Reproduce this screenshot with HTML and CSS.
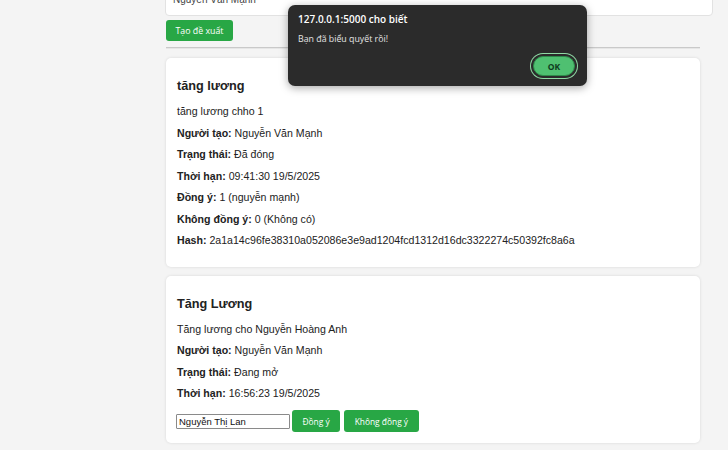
FILE: index.html
```html
<!DOCTYPE html>
<html lang="vi">
<head>
<meta charset="utf-8">
<title>Đề xuất</title>
<link rel="stylesheet" href="styles.css">
</head>
<body>
<div class="page">
  <div class="container">
    <div class="topbox"><span class="topval">Nguyễn Văn Mạnh</span></div>
    <button class="btn btn-create">Tạo đề xuất</button>
    <hr class="sep">

    <div class="card">
      <h3 class="title">tăng lương</h3>
      <p>tăng lương chho 1</p>
      <p><b>Người tạo:</b> Nguyễn Văn Mạnh</p>
      <p><b>Trạng thái:</b> Đã đóng</p>
      <p><b>Thời hạn:</b> 09:41:30 19/5/2025</p>
      <p><b>Đồng ý:</b> 1 (nguyễn mạnh)</p>
      <p><b>Không đồng ý:</b> 0 (Không có)</p>
      <p><b>Hash:</b> 2a1a14c96fe38310a052086e3e9ad1204fcd1312d16dc3322274c50392fc8a6a</p>
    </div>

    <div class="card">
      <h3 class="title">Tăng Lương</h3>
      <p>Tăng lương cho Nguyễn Hoàng Anh</p>
      <p><b>Người tạo:</b> Nguyễn Văn Mạnh</p>
      <p><b>Trạng thái:</b> Đang mở</p>
      <p><b>Thời hạn:</b> 16:56:23 19/5/2025</p>
      <div class="vote">
        <input class="name" type="text" value="Nguyễn Thị Lan">
        <button class="btn btn-vote">Đồng ý</button>
        <button class="btn btn-vote">Không đồng ý</button>
      </div>
    </div>
  </div>

  <div class="dialog">
    <div class="dlg-title">127.0.0.1:5000 cho biết</div>
    <div class="dlg-msg">Bạn đã biểu quyết rồi!</div>
    <div class="dlg-actions"><button class="dlg-ok">OK</button></div>
  </div>
</div>
</body>
</html>
```

FILE: styles.css
```css
html {
  background: #ffffff;
}
body {
  margin: 0;
  font-family: "Liberation Sans", Arial, sans-serif;
  color: #222;
}
.page {
  position: relative;
  background: #f4f4f4;
  height: 450px;
  overflow: hidden;
}
.container {
  width: 534px;
  margin-left: 166px;
}
.topbox {
  box-sizing: border-box;
  width: 548px;
  height: 32px;
  margin-top: -16px;
  margin-left: -1px;
  background: #fff;
  border: 1px solid #e2e2e2;
  border-radius: 4px;
  padding: 9px 7px 0;
  font-size: 10px;
  line-height: 12px;
  color: #444;
}
.btn {
  font-family: "Open Sans", "Noto Sans", sans-serif;
  background: #28a745;
  color: #fff;
  border: none;
  border-radius: 3px;
  font-size: 8.8px;
  cursor: pointer;
}
.btn-create {
  display: block;
  margin-top: 4px;
  width: 67px;
  height: 21px;
  padding: 0;
}
.sep {
  margin: 6px 0 9px;
  border: none;
  border-top: 1px solid #c9c9c9;
  border-bottom: 1px solid #e6e6e6;
}
.card {
  background: #fff;
  border-radius: 5px;
  box-shadow: 0 0 3px rgba(0, 0, 0, 0.12);
  padding: 11px 11px;
  margin-bottom: 9px;
}
.title {
  font-size: 12.7px;
  line-height: 15px;
  margin: 10px 0 11px;
  font-weight: bold;
}
.card p {
  font-size: 10.6px;
  line-height: 13px;
  margin: 8.5px 0;
}
.vote {
  display: flex;
  align-items: center;
  margin-top: 10px;
}
.name {
  box-sizing: border-box;
  width: 114px;
  height: 15px;
  padding: 0 2px;
  border: 1px solid #8a8a8a;
  border-radius: 1px;
  font-family: "Liberation Sans", Arial, sans-serif;
  font-size: 9.5px;
  color: #111;
  margin: 0 2px 0 -1px;
}
.btn-vote {
  height: 22px;
  padding: 0 10.5px;
  margin-right: 4px;
  font-size: 8.4px;
}
.dialog {
  position: absolute;
  left: 288px;
  top: 5px;
  width: 299px;
  height: 81px;
  box-sizing: border-box;
  background: #2b2b2b;
  border-radius: 7px;
  box-shadow: 0 2px 8px rgba(0, 0, 0, 0.35);
  padding: 8px 9px 0 10px;
  font-family: "Open Sans", "Noto Sans", sans-serif;
  color: #fff;
}
.dlg-title {
  font-size: 10px;
  font-weight: 600;
  line-height: 13px;
}
.dlg-msg {
  margin-top: 7px;
  font-size: 8.8px;
  line-height: 12px;
  color: #e4e4e4;
}
.dlg-actions {
  display: flex;
  justify-content: flex-end;
  margin-top: 11px;
}
.dlg-ok {
  width: 42px;
  height: 20px;
  margin-right: 3px;
  padding: 0;
  border: 1px solid #2f8a4b;
  border-radius: 10px;
  background: #4fc071;
  color: #0e3b1d;
  font-family: "Open Sans", "Noto Sans", sans-serif;
  font-size: 8.5px;
  font-weight: 700;
  box-shadow: 0 0 0 2px #2b2b2b, 0 0 0 3px #8fd9a4;
}
```
